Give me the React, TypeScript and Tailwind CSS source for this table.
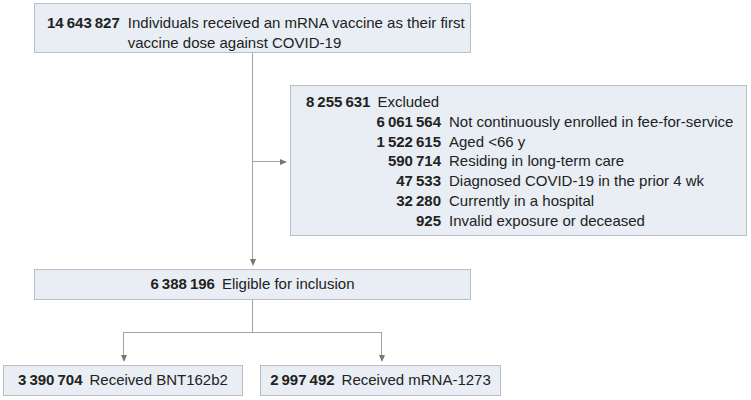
const box = 'border border-[#b7bfc5] bg-[#e8eef3]';

function DownArrow() {
  return (
    <div className="flex h-full w-px flex-col items-center">
      <div className="w-px flex-1 bg-[#a3a3a3]" />
      <div className="h-0 w-0 shrink-0 border-x-[3.5px] border-t-[7px] border-x-transparent border-t-[#767676]" />
      <div className="h-[3px] shrink-0" />
    </div>
  );
}

function RightArrow() {
  return (
    <div className="flex h-[7px] w-[37px] items-center">
      <div className="h-px flex-1 bg-[#a3a3a3]" />
      <div className="h-0 w-0 shrink-0 border-y-[3.5px] border-l-[7px] border-y-transparent border-l-[#767676]" />
      <div className="w-[3px] shrink-0" />
    </div>
  );
}

const excluded: [string, string][] = [
  ['6\u2009061\u2009564', 'Not continuously enrolled in fee-for-service'],
  ['1\u2009522\u2009615', 'Aged <66 y'],
  ['590\u2009714', 'Residing in long-term care'],
  ['47\u2009533', 'Diagnosed COVID-19 in the prior 4 wk'],
  ['32\u2009280', 'Currently in a hospital'],
  ['925', 'Invalid exposure or deceased'],
];

function CountBox({ n, label, className }: { n: string; label: string; className: string }) {
  return (
    <div className={`${box} flex h-[31px] items-center justify-center gap-[7px] whitespace-nowrap ${className}`}>
      <span className="font-bold">{n}</span>
      <span>{label}</span>
    </div>
  );
}

export default function App() {
  return (
    <div
      className="h-[400px] w-[751px] overflow-hidden bg-white text-[15px] text-[#222]"
      style={{ fontFamily: '"Liberation Sans", Arial, sans-serif' }}
    >
      {/* cohort */}
      <div className={`${box} ml-[34px] mt-[3px] flex h-[50px] w-[437px] gap-[8px] whitespace-nowrap pl-[12px] pt-[9px] leading-[19.5px]`}>
        <span className="font-bold">14{'\u2009'}643{'\u2009'}827</span>
        <span>
          Individuals received an mRNA vaccine as their first
          <br />
          vaccine dose against COVID-19
        </span>
      </div>

      {/* exclusions */}
      <div className="flex h-[216px] items-start">
        <div className="w-[252px] shrink-0" />
        <DownArrow />
        <div className="mt-[105px]">
          <RightArrow />
        </div>
        <div className={`${box} mt-[32px] h-[151px] w-[457px] whitespace-nowrap pt-[6px] leading-[19.8px]`}>
          <div className="flex gap-[7px] pl-[15px]">
            <span className="font-bold">8{'\u2009'}255{'\u2009'}631</span>
            <span>Excluded</span>
          </div>
          {excluded.map(([n, label]) => (
            <div key={label} className="grid grid-cols-[150px_1fr] gap-x-[8px]">
              <span className="text-right font-bold">{n}</span>
              <span>{label}</span>
            </div>
          ))}
        </div>
      </div>

      <CountBox n={'6\u2009388\u2009196'} label="Eligible for inclusion" className="ml-[34px] w-[437px]" />

      {/* split */}
      <div className="ml-[252px] h-[32px] w-px bg-[#a3a3a3]" />
      <div className="ml-[123px] flex h-[33px] w-[259px] flex-col">
        <div className="h-px w-full bg-[#a3a3a3]" />
        <div className="flex flex-1 justify-between">
          <DownArrow />
          <DownArrow />
        </div>
      </div>

      <div className="ml-[3px] flex gap-[17px]">
        <CountBox n={'3\u2009390\u2009704'} label="Received BNT162b2" className="w-[240px]" />
        <CountBox n={'2\u2009997\u2009492'} label="Received mRNA-1273" className="w-[241px]" />
      </div>
    </div>
  );
}
